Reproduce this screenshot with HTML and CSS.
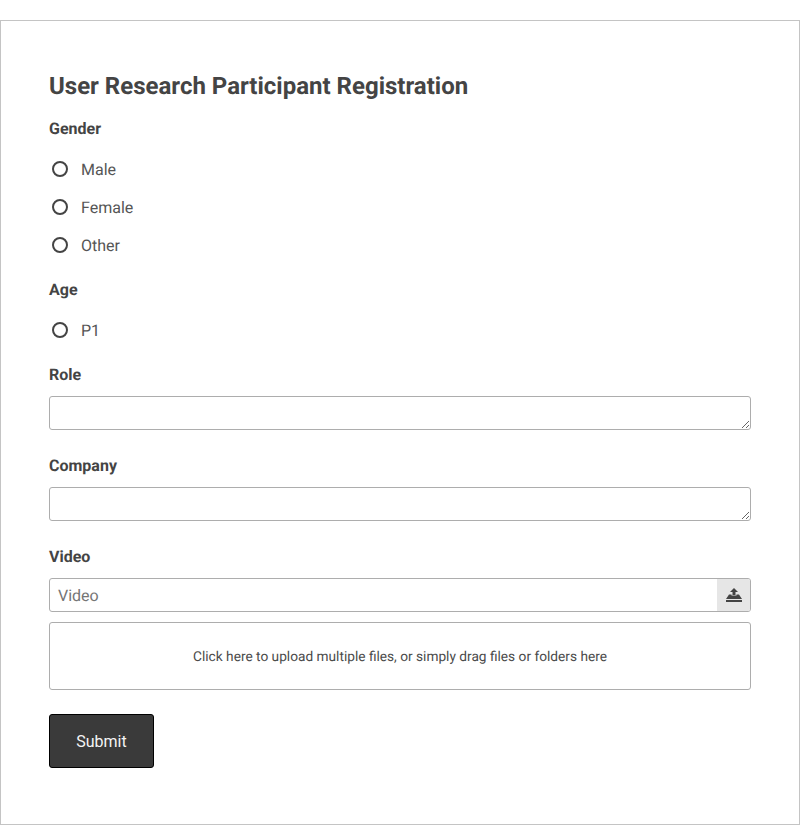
FILE: index.html
```html
<!DOCTYPE html>
<html>
<head>
  <title>User Research Participant Registration</title>
  <link rel="stylesheet" href="styles.css">
</head>
<body>
<form class="form-box">
  <h1>User Research Participant Registration</h1>

  <!-- Gender -->
  <div class="label">Gender</div>
  <div class="choices">
    <label class="choice"><span class="radio"></span>Male</label>
    <label class="choice"><span class="radio"></span>Female</label>
    <label class="choice"><span class="radio"></span>Other</label>
  </div>

  <!-- Age -->
  <div class="label">Age</div>
  <div class="choices">
    <label class="choice"><span class="radio"></span>P1</label>
  </div>

  <!-- Role -->
  <div class="label">Role</div>
  <textarea class="text-area"></textarea>

  <!-- Company -->
  <div class="label">Company</div>
  <textarea class="text-area"></textarea>

  <!-- Video -->
  <div class="label">Video</div>
  <div class="file-input">
    <div class="file-name">Video</div>
    <div class="file-button">
      <svg width="16" height="14" viewBox="0 0 16 14">
        <path d="M8 0 L12 4 H9.5 V7 H6.5 V4 H4 Z" fill="#444"/>
        <path d="M3 6.5 H5.5 V7.5 H10.5 V6.5 H13 L16 11 H0 Z" fill="#444"/>
        <rect x="0" y="12" width="16" height="2" fill="#444"/>
      </svg>
    </div>
  </div>
  <div class="drop-zone">Click here to upload multiple files, or simply drag files or folders here</div>

  <button type="button" class="submit">Submit</button>
</form>
</body>
</html>
```

FILE: styles.css
```css
/* General Styles */
html, body {
    margin: 0;
    padding: 0;
}

body {
    padding-top: 20px;
    font-family: Roboto, sans-serif;
    color: #444;
    background-color: #fff;
    text-rendering: geometricPrecision;
}

.form-box {
    box-sizing: border-box;
    height: 805px;
    padding: 48px 48px 0;
    border: 1px solid #c4c4c4;
}

h1 {
    margin: 0 0 14px;
    font-size: 24px;
    line-height: 34px;
    font-weight: 700;
    color: #444;
}

.label {
    margin-bottom: 9px;
    font-size: 16px;
    line-height: 24px;
    font-weight: 700;
}

/* Radio buttons */
.choices {
    display: flex;
    flex-direction: column;
    margin-bottom: 14px;
}

.choice {
    display: flex;
    align-items: center;
    gap: 13px;
    height: 38px;
    padding-left: 3px;
    font-size: 16px;
    color: #555;
}

.radio {
    box-sizing: border-box;
    width: 16px;
    height: 16px;
    border: 2px solid #444;
    border-radius: 50%;
}

/* Text inputs */
.text-area {
    display: block;
    box-sizing: border-box;
    width: 100%;
    height: 34px;
    margin: 0 0 24px;
    padding: 6px 8px;
    border: 1px solid #adadad;
    border-radius: 3px;
    font-family: Roboto, sans-serif;
    font-size: 16px;
    outline: none;
}

/* File upload */
.file-input {
    display: flex;
    height: 34px;
    box-sizing: border-box;
    border: 1px solid #adadad;
    border-radius: 3px;
    margin-bottom: 10px;
}

.file-name {
    flex: 1;
    padding-left: 8px;
    font-size: 16px;
    line-height: 33px;
    color: #757575;
}

.file-button {
    display: flex;
    align-items: center;
    justify-content: center;
    width: 33px;
    background-color: #e6e6e6;
    border-radius: 0 2px 2px 0;
}

.drop-zone {
    box-sizing: border-box;
    height: 68px;
    margin-bottom: 24px;
    border: 1px solid #adadad;
    border-radius: 3px;
    font-size: 13.7px;
    line-height: 68px;
    text-align: center;
    color: #4a4a4a;
}

.submit {
    display: block;
    width: 105px;
    height: 54px;
    padding: 0;
    border: 1px solid #000;
    border-radius: 3px;
    background-color: #3a3a3a;
    color: #f4f4f4;
    font-family: Roboto, sans-serif;
    font-size: 16px;
}
```
